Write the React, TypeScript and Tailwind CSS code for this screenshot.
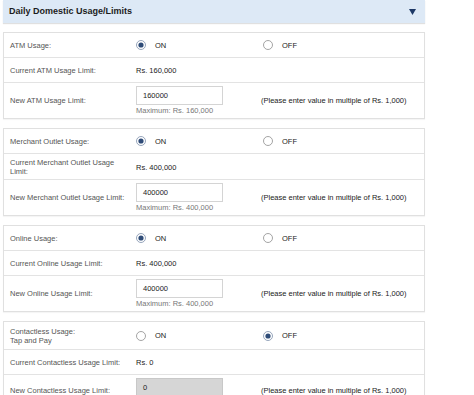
import React from 'react';

type Section = {
    usageLabel: React.ReactNode;
    on: boolean;
    currentLabel: string;
    current: string;
    newLabel: string;
    value: string;
    max?: string;
    disabled?: boolean;
};

const sections: Section[] = [
    {
        usageLabel: 'ATM Usage:',
        on: true,
        currentLabel: 'Current ATM Usage Limit:',
        current: 'Rs. 160,000',
        newLabel: 'New ATM Usage Limit:',
        value: '160000',
        max: 'Maximum: Rs. 160,000',
    },
    {
        usageLabel: 'Merchant Outlet Usage:',
        on: true,
        currentLabel: 'Current Merchant Outlet Usage Limit:',
        current: 'Rs. 400,000',
        newLabel: 'New Merchant Outlet Usage Limit:',
        value: '400000',
        max: 'Maximum: Rs. 400,000',
    },
    {
        usageLabel: 'Online Usage:',
        on: true,
        currentLabel: 'Current Online Usage Limit:',
        current: 'Rs. 400,000',
        newLabel: 'New Online Usage Limit:',
        value: '400000',
        max: 'Maximum: Rs. 400,000',
    },
    {
        usageLabel: <>Contactless Usage:<br />Tap and Pay</>,
        on: false,
        currentLabel: 'Current Contactless Usage Limit:',
        current: 'Rs. 0',
        newLabel: 'New Contactless Usage Limit:',
        value: '0',
        disabled: true,
    },
];

function Radio({ checked, label }: { checked: boolean; label: string }) {
    return (
        <div className="flex items-center gap-[9px]">
            <svg width="10" height="10" viewBox="0 0 10 10">
                <circle cx="5" cy="5" r="4.5" fill="#fff" stroke={checked ? '#8a9bb3' : '#9a9a9a'} strokeWidth="0.9" />
                {checked && <circle cx="5" cy="5" r="2.6" fill="#2f4c78" />}
            </svg>
            <span className="text-[#222]">{label}</span>
        </div>
    );
}

export default function App() {
    return (
        <main className="min-h-screen bg-white text-[7.5px] leading-[1.2] text-[#555]" style={{ fontFamily: '"Liberation Sans", Arial, sans-serif' }}>
            <div className="ml-[3px] w-[422px]">
                <div className="flex h-[23px] items-center justify-between bg-[#dde9f6] pl-[6px] pr-[9px] shadow-[0_1px_1px_rgba(0,0,0,0.12)]">
                    <h1 className="text-[9px] font-bold text-[#1c1c1c]">Daily Domestic Usage/Limits</h1>
                    <svg width="7" height="6" viewBox="0 0 7 6">
                        <path d="M0 0 H7 L3.5 6 Z" fill="#1d3866" />
                    </svg>
                </div>

                <div className="mt-[9px] flex flex-col gap-[9px]">
                    {sections.map((s, i) => (
                        <div key={i} className="border border-[#e0e0e0] bg-white shadow-[0_1px_1px_rgba(0,0,0,0.04)]">
                            <div className={`grid grid-cols-[126px_127px_1fr] items-center pl-[6px] ${s.on ? 'h-[24px]' : 'h-[27px]'}`}>
                                <div className="pr-[6px]">{s.usageLabel}</div>
                                <Radio checked={s.on} label="ON" />
                                <Radio checked={!s.on} label="OFF" />
                            </div>
                            <div className="grid min-h-[25px] grid-cols-[126px_127px_1fr] items-center border-t border-[#e3e3e3] pt-[4px] pb-[3px] pl-[6px]">
                                <div className="pr-[8px]">{s.currentLabel}</div>
                                <div className="text-[#222]">{s.current}</div>
                            </div>
                            <div className="grid grid-cols-[126px_127px_1fr] items-center border-t border-[#e3e3e3] pl-[6px] pt-[3px] pb-[3px]">
                                <div className="pr-[8px]">{s.newLabel}</div>
                                <div className="flex flex-col">
                                    <div className={`flex h-[19px] w-[87px] items-center border px-[6px] text-[#222] ${s.disabled ? 'border-[#c8c8c8] bg-[#d6d6d6]' : 'border-[#d4d4d4] bg-white'}`}>
                                        {s.value}
                                    </div>
                                    <div className={`mt-[1px] text-[#777] ${s.disabled ? 'h-[5px]' : 'h-[9px]'}`}>{s.max}</div>
                                </div>
                                <div className="-ml-[2px] text-[#222]">(Please enter value in multiple of Rs. 1,000)</div>
                            </div>
                        </div>
                    ))}
                </div>
            </div>
        </main>
    );
}
